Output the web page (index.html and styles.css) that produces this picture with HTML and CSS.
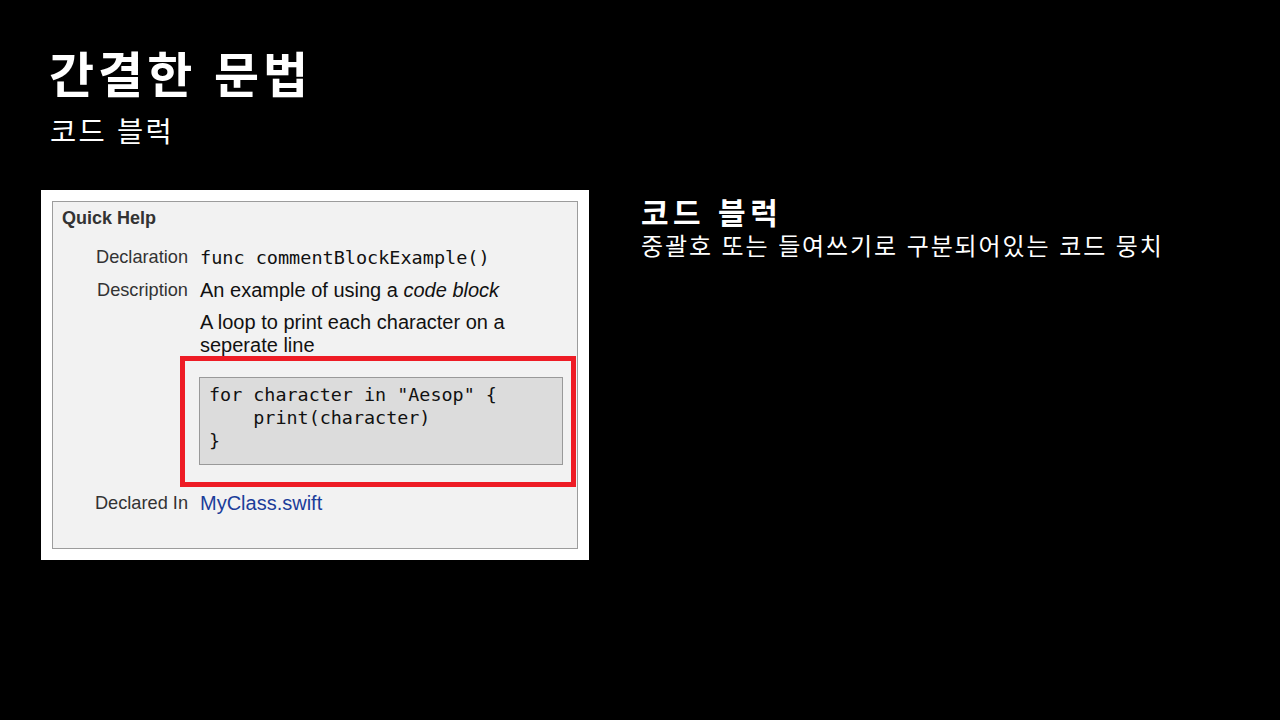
FILE: index.html
```html
<!DOCTYPE html>
<html lang="ko">
<head>
<meta charset="utf-8">
<title>간결한 문법</title>
<link rel="stylesheet" href="styles.css">
</head>
<body>
<div class="slide">
  <header class="slide-head">
    <h1 class="title">간결한 문법</h1>
    <p class="subtitle">코드 블럭</p>
  </header>
  <main class="content">
    <div class="card">
      <div class="panel">
        <div class="panel-title">Quick Help</div>
        <div class="rows">
          <div class="label">Declaration</div>
          <div class="value mono">func commentBlockExample()</div>

          <div class="label">Description</div>
          <div class="value desc">
            <p class="para">An example of using a <em>code block</em></p>
            <p class="para">A loop to print each character on a seperate line</p>
            <div class="code-wrap">
              <pre class="code">for character in "Aesop" {
    print(character)
}</pre>
            </div>
          </div>

          <div class="label declared">Declared In</div>
          <div class="value declared"><span class="link">MyClass.swift</span></div>
        </div>
      </div>
    </div>
    <section class="note">
      <h2 class="note-title">코드 블럭</h2>
      <p class="note-text">중괄호 또는 들여쓰기로 구분되어있는 코드 뭉치</p>
    </section>
  </main>
</div>
</body>
</html>
```

FILE: styles.css
```css
html, body {
  margin: 0;
  padding: 0;
  background: #000;
}
.slide {
  width: 1280px;
  height: 720px;
  background: #000;
  color: #fff;
  font-family: "Noto Sans CJK KR", "Noto Sans", sans-serif;
  box-sizing: border-box;
  padding: 38px 0 0 0;
}
.slide-head {
  padding-left: 49px;
}
.title {
  margin: 0;
  font-size: 49px;
  font-weight: 700;
  line-height: 68px;
  letter-spacing: 4px;
}
.subtitle {
  margin: 4px 0 0 1px;
  font-size: 28.5px;
  font-weight: 400;
  line-height: 40px;
  letter-spacing: 2.2px;
}
.content {
  display: flex;
  align-items: flex-start;
  margin-top: 40px;
  padding-left: 41px;
}
.card {
  width: 548px;
  height: 370px;
  background: #fff;
  padding: 11px;
  box-sizing: border-box;
  flex: none;
}
.panel {
  height: 100%;
  box-sizing: border-box;
  border: 1px solid #9c9c9c;
  background: #f2f2f2;
  padding: 6px 0 0 9px;
  font-family: "Liberation Sans", Arial, sans-serif;
}
.panel-title {
  font-size: 18px;
  font-weight: 700;
  line-height: 20px;
  color: #333;
}
.rows {
  display: grid;
  grid-template-columns: 126px 1fr;
  column-gap: 12px;
  row-gap: 10px;
  margin-top: 18px;
}
.label {
  text-align: right;
  font-size: 18.2px;
  line-height: 23px;
  color: #333;
}
.value {
  font-size: 20px;
  line-height: 23px;
  color: #111;
  padding-right: 10px;
}
.mono {
  font-family: "DejaVu Sans Mono", "Liberation Mono", monospace;
  font-size: 18.5px;
}
.para {
  margin: 0 0 9px 0;
}
.para em {
  font-style: italic;
}
.code-wrap {
  position: relative;
  margin: 20px 0 0 -1px;
  width: 364px;
}
.code-wrap::before {
  content: "";
  position: absolute;
  left: -19px;
  right: -13px;
  top: -21px;
  bottom: -22px;
  border: 5px solid #ee1c25;
}
.code {
  margin: 0;
  border: 1px solid #999;
  background: #dcdcdc;
  padding: 5px 9px 12px 9px;
  font-family: "DejaVu Sans Mono", "Liberation Mono", monospace;
  font-size: 18.4px;
  line-height: 23px;
  color: #111;
}
.declared {
  margin-top: 17px;
}
.link {
  color: #1b3d9a;
}
.note {
  margin-left: 52px;
  padding-top: 3px;
}
.note-title {
  margin: 0;
  font-size: 30px;
  font-weight: 700;
  line-height: 36px;
  letter-spacing: 4.5px;
}
.note-text {
  margin: 0;
  font-size: 24px;
  line-height: 32px;
  letter-spacing: 1.9px;
}
```
